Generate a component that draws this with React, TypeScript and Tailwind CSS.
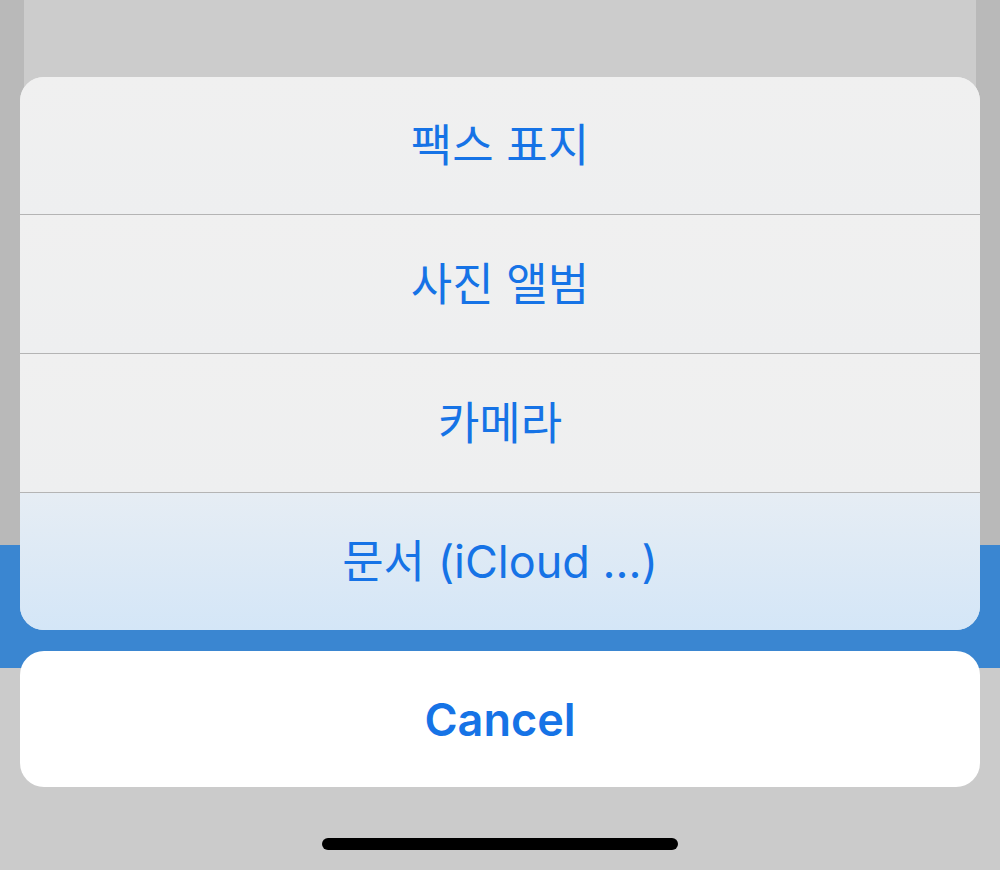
import React from 'react';

const options = ['팩스 표지', '사진 앨범', '카메라', '문서 (iCloud ...)'];

const rowHeights = ['h-[138px]', 'h-[139px]', 'h-[139px]', 'h-[137px]'];

const font = { fontFamily: 'Inter, "Noto Sans CJK KR", sans-serif' };

export default function App() {
  return (
    <div className="relative w-[1000px] h-[870px] overflow-hidden bg-[#cbcbcb]" style={font}>
      {/* backdrop behind the sheet */}
      <div className="absolute inset-0 flex flex-col">
        <div className="flex h-[545px]">
          <div className="w-[24px] bg-[#b9b9b9]" />
          <div className="flex-1 bg-[#cccccc]" />
          <div className="w-[24px] bg-[#b9b9b9]" />
        </div>
        <div className="h-[123px] bg-[#3a86d1]" />
        <div className="flex-1 bg-[#cbcbcb]" />
      </div>

      {/* action sheet */}
      <div className="relative flex flex-col px-[20px] pt-[77px]">
        <div className="flex flex-col rounded-[24px] overflow-hidden bg-[#f0f0f0]">
          {options.map((label, i) => (
            <div
              key={label}
              className={
                i === options.length - 1
                  ? `flex items-center justify-center ${rowHeights[i]} bg-gradient-to-b from-[#e6edf4] to-[#d4e6f7]`
                  : `flex items-center justify-center ${rowHeights[i]} border-b border-[#b4b4b4] bg-gradient-to-b from-[#f0f0f0] to-[#eeeff0]`
              }
            >
              <span className="text-[45px] leading-none text-[#1673e6]">{label}</span>
            </div>
          ))}
        </div>

        <div className="mt-[21px] flex items-center justify-center h-[136px] rounded-[24px] bg-white">
          <span className="text-[45px] font-semibold leading-none text-[#1673e6]">Cancel</span>
        </div>

        <div className="flex justify-center pt-[51px]">
          <div className="w-[356px] h-[12px] rounded-full bg-black" />
        </div>
      </div>
    </div>
  );
}
